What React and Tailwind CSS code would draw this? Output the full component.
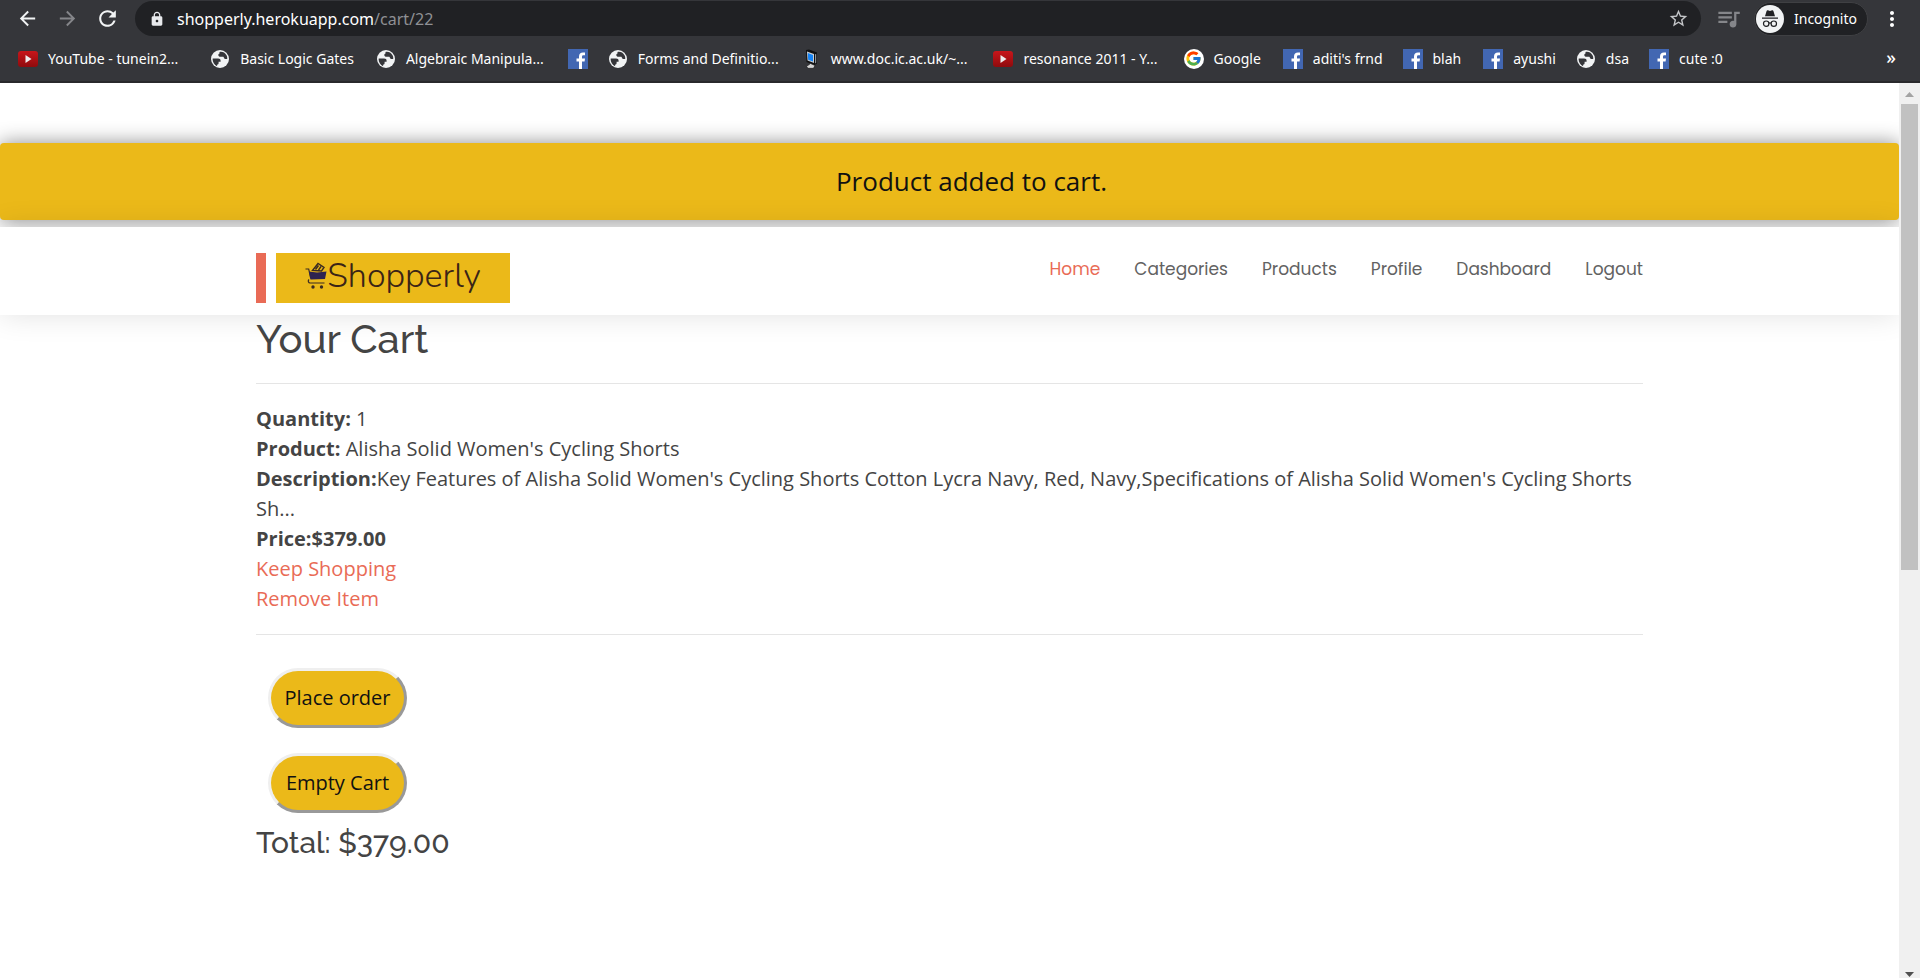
import { MdArrowBack, MdArrowForward, MdRefresh, MdLock, MdStarBorder, MdQueueMusic, MdMoreVert } from "react-icons/md";
import { FcGoogle } from "react-icons/fc";

function YouTube() {
  return (
    <svg viewBox="0 0 20 16" className="h-4 w-5 shrink-0">
      <defs>
        <linearGradient id="yt" x1="0" y1="0" x2="0" y2="1">
          <stop offset="0" stopColor="#c8161b" />
          <stop offset="1" stopColor="#8f0b0d" />
        </linearGradient>
      </defs>
      <rect width="20" height="16" rx="3" fill="url(#yt)" />
      <path d="M7.500 4 13.500 8l-6 4z" fill="#eee" />
    </svg>
  );
}

function Facebook() {
  return (
    <svg viewBox="0 0 20 20" className="size-5 shrink-0">
      <rect width="20" height="20" fill="#4267b2" />
      <path d="M11 20v-7.500H8.500V9.500H11V7.600C11 5 12.500 3.500 15 3.500h2v2.800h-1.500c-1.200 0-1.500.6-1.500 1.500v1.700h3l-.4 3H14V20z" fill="#fff" />
    </svg>
  );
}

function Globe() {
  return (
    <svg viewBox="0 0 20 20" className="size-5 shrink-0">
      <circle cx="10" cy="10" r="9" fill="#f1f3f4" />
      <path
        d="M2.800 9.500h5.200c1.800 0 2.600.8 2.600 2.300v1h-2v1.200c0 1-.6 1.700-1.500 1.700v1.500C4.300 16 2.600 13 2.600 10zM9.500 3c2.500-.6 5.500.4 7 3.200.6 1 .9 2.500.7 3.800h-1.700c-1 0-1.400-.6-1.700-1.500-.2-.6-.7-.7-1.300-.7h-2C9.200 7.800 8.300 7 8.300 6s.6-1.400 1.200-1.600z"
        fill="#35363a"
      />
    </svg>
  );
}

function Computer() {
  return (
    <svg viewBox="0 0 20 20" className="size-5 shrink-0">
      <path d="M5 1l3-.5 8 3v11l-2.500 1.500L5.500 13z" fill="#111" />
      <path d="M6 2.500l7 2.500v9l-6.500-2.500z" fill="#c9ced3" />
      <path d="M6.800 4l5.200 2v6.500L7.200 10.700z" fill="#1684f5" />
      <path d="M14 5.500l1.200-.8v9L14 14.500z" fill="#8d949b" />
      <path d="M5.500 17.500l4-3 4.500 2-1.500 2.800H7z" fill="#d5d5d5" stroke="#111" strokeWidth=".6" />
    </svg>
  );
}

function Incognito() {
  return (
    <svg viewBox="0 0 28 28" className="size-7 shrink-0">
      <circle cx="14" cy="14" r="14" fill="#f1f3f4" />
      <path d="M6 12.500h16v1.300H6zM9 11.300l1.600-5.400c.2-.6.700-.8 1.300-.6l2.100.6 2.100-.6c.6-.2 1.100 0 1.300.6L19 11.300z" fill="#202124" />
      <g fill="none" stroke="#202124" strokeWidth="1.200">
        <circle cx="10.200" cy="18.700" r="2.700" />
        <circle cx="17.800" cy="18.700" r="2.700" />
        <path d="M12.900 18.300c.7-.5 1.500-.5 2.200 0" />
      </g>
    </svg>
  );
}

function CartMark() {
  return (
    <svg viewBox="0 0 22 28" className="h-7 w-[22px] shrink-0">
      <path d="M.5 7h3.200l2 9.500M4 17.500c-1.500 1.500-.5 3.500 1 3.500h14.500" fill="none" stroke="#3a2a22" strokeWidth="1.200" />
      <path d="M4 9.500l8 1 9.500-1-1.500 7.500-14.500.5z" fill="#2d2350" />
      <path d="M7.500 8.500l5.500-7 6 4-2.500 3.500zM10.500 7.500l3-4M13.500 8l2.500-3.500" fill="none" stroke="#3a2a22" strokeWidth="1.400" />
      <circle cx="8" cy="25" r="1.700" fill="#3a2a22" />
      <circle cx="16.500" cy="25" r="1.700" fill="#3a2a22" />
    </svg>
  );
}

const bookmarks = [
  { icon: YouTube, label: "YouTube - tunein2...", gap: "mr-8" },
  { icon: Globe, label: "Basic Logic Gates", gap: "mr-[22px]" },
  { icon: Globe, label: "Algebraic Manipula...", gap: "mr-6" },
  { icon: Facebook, label: "", gap: "mr-5" },
  { icon: Globe, label: "Forms and Definitio...", gap: "mr-[22px]" },
  { icon: Computer, label: "www.doc.ic.ac.uk/~...", gap: "mr-[26px]" },
  { icon: YouTube, label: "resonance 2011 - Y...", gap: "mr-[26px]" },
  { icon: FcGoogle, label: "Google", gap: "mr-[22px]", google: true },
  { icon: Facebook, label: "aditi's frnd", gap: "mr-5" },
  { icon: Facebook, label: "blah", gap: "mr-[22px]" },
  { icon: Facebook, label: "ayushi", gap: "mr-5" },
  { icon: Globe, label: "dsa", gap: "mr-5" },
  { icon: Facebook, label: "cute :0", gap: "" },
];

function BrowserBar() {
  return (
    <header className="mr-1 border-b-2 border-[#29292c] bg-[#35363a] font-['Noto_Sans','Open_Sans',sans-serif] text-white">
      <div className="flex h-9 items-center pt-px">
        <button aria-label="Back" className="ml-4 text-[#f1f3f4]"><MdArrowBack size={23} /></button>
        <button aria-label="Forward" className="ml-[17px] text-[#85868a]"><MdArrowForward size={23} /></button>
        <button aria-label="Reload" className="ml-4 text-[#f1f3f4]"><MdRefresh size={25} /></button>
        <div className="ml-[15px] flex h-[35px] min-w-0 flex-1 items-center rounded-full bg-[#202124] pr-3 pl-3.5">
          <MdLock size={16} className="shrink-0 text-[#e8eaed]" />
          <p className="ml-3 flex-1 truncate text-base leading-6">
            shopperly.herokuapp.com<span className="text-[#8f9094]">/cart/22</span>
          </p>
          <button aria-label="Bookmark this page" className="text-[#c4c6c9]"><MdStarBorder size={21} /></button>
        </div>
        <button aria-label="Media controls" className="ml-3.5 text-[#85868a]"><MdQueueMusic size={27} /></button>
        <button className="ml-3 flex h-[34px] items-center gap-2.5 rounded-full border border-[#3f4043] bg-[#202124] pr-2.5 pl-px text-sm">
          <Incognito />
          Incognito
        </button>
        <button aria-label="Menu" className="mr-4 ml-3"><MdMoreVert size={24} /></button>
      </div>
      <nav aria-label="Bookmarks" className="flex h-[45px] items-center pl-[18px] text-sm">
        {bookmarks.map(({ icon: Icon, label, gap, google }, i) => (
          <a key={i} href="#" aria-label={label || "Facebook"} className={`flex shrink-0 items-center gap-2.5 whitespace-nowrap ${gap}`}>
            {google ? (
              <span className="flex size-5 items-center justify-center rounded-full bg-white"><Icon size={17} /></span>
            ) : (
              <Icon />
            )}
            {label}
          </a>
        ))}
        <button aria-label="More bookmarks" className="mr-6 ml-auto pb-1 text-lg font-medium">»</button>
      </nav>
    </header>
  );
}

function ScrollBar() {
  return (
    <div aria-hidden="true" className="mr-1 flex w-[21px] shrink-0 flex-col items-center bg-[#f0f0f0]">
      <svg viewBox="0 0 21 21" className="size-[21px]"><path d="M6 14l4.500-5 4.500 5z" fill="#a3a3a3" /></svg>
      <div className="h-[466px] w-[17px] bg-[#c1c1c1]" />
      <svg viewBox="0 0 21 21" className="mt-auto h-[21px] w-[21px]"><path d="M6 15l4.500 5 4.500-5z" fill="#505050" /></svg>
    </div>
  );
}

const links = ["Home", "Categories", "Products", "Profile", "Dashboard", "Logout"];

const action = "mx-3 rounded-full border-[3px] border-t-[#efefef] border-r-[#999] border-b-[#999] border-l-[#efefef] bg-[#ebb919] h-[60px] w-[139px] text-xl text-[#111]";

export default function App() {
  return (
    <div className="flex min-h-screen flex-col bg-white">
      <BrowserBar />
      <div className="flex flex-1">
        <div className="min-w-0 flex-1 overflow-hidden pt-[60px] font-['Open_Sans',sans-serif] text-xl leading-[30px] text-[#444]">
          <div role="status" className="flex h-[77px] items-center justify-center rounded bg-[#ebb919] pb-0.5 pl-11 text-[26px] text-[#111] shadow-[0_0_20px_rgba(0,0,0,0.45)]">
            Product added to cart.
          </div>
          <header className="relative mt-[7px] h-[88px] bg-white px-64 shadow-[0_0_30px_rgba(0,0,0,0.12)]">
            <div className="flex justify-between pt-[26px]">
              <a href="#" aria-label="Shopperly" className="flex h-[50px] gap-2.5">
                <span className="w-2.5 bg-[#e96b56]" />
                <span className="flex w-[234px] items-center justify-center bg-[#ebb919] pb-1 font-['Nunito','Lato',sans-serif] text-[34px] font-light text-[#3a2417]">
                  <CartMark />
                  Shopperly
                </span>
              </a>
              <nav className="flex gap-[34px] pt-px font-['Poppins','Lato',sans-serif] text-[17px] leading-[30px] text-[#626262]">
                {links.map((l) => (
                  <a key={l} href="#" className="first:text-[#e96b56]">{l}</a>
                ))}
              </nav>
            </div>
          </header>
          <main className="relative px-64">
            <h1 className="font-['Raleway','Lato',sans-serif] text-[40px] leading-[48px] font-medium">Your Cart</h1>
            <hr className="my-5 border-[#e5e5e5]" />
            <p><b>Quantity:</b> 1</p>
            <p><b>Product:</b> Alisha Solid Women's Cycling Shorts</p>
            <p><b>Description:</b>Key Features of Alisha Solid Women's Cycling Shorts Cotton Lycra Navy, Red, Navy,Specifications of Alisha Solid Women's Cycling Shorts Sh...</p>
            <p className="font-bold">Price:$379.00</p>
            <p><a href="#" className="text-[#e96b56]">Keep Shopping</a></p>
            <p><a href="#" className="text-[#e96b56]">Remove Item</a></p>
            <hr className="my-5 border-[#e5e5e5]" />
            <div className="flex flex-col items-start gap-[25px] pt-[13px]">
              <button className={action}>Place order</button>
              <button className={action}>Empty Cart</button>
            </div>
            <h2 className="mt-3 font-['Raleway','Lato',sans-serif] text-[30px] leading-9 font-medium">Total: $379.00</h2>
          </main>
        </div>
        <ScrollBar />
      </div>
    </div>
  );
}
